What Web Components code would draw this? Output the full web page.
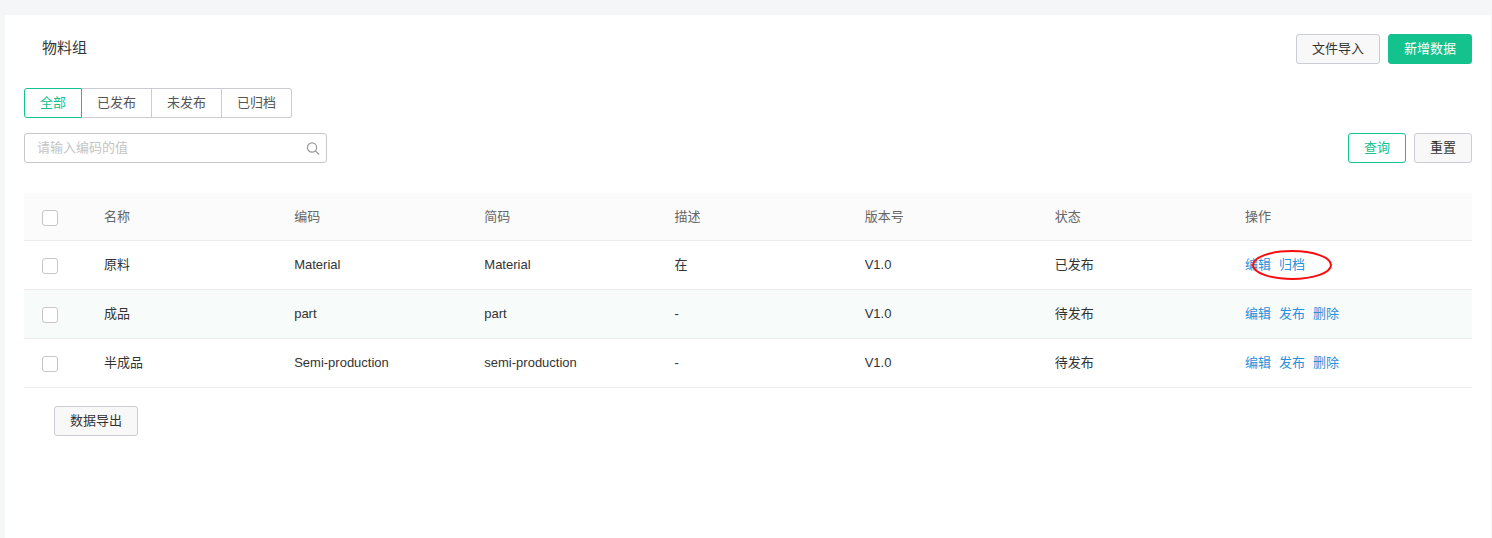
<!DOCTYPE html>
<html lang="zh-CN">
<head>
<meta charset="utf-8">
<title>物料组</title>
<style>
  html { height: 100%; }
  body {
    margin: 0;
    min-height: 100%;
    display: flex;
    background: #f5f6f8;
    color: #333;
    font-family: "Liberation Sans", "Noto Sans CJK SC", sans-serif;
    font-size: 13px;
    line-height: 20px;
    --green: #13c28d;
    --border: #c9cdd2;
    --link: #2b8fd9;
  }
</style>
</head>
<body>
<material-page></material-page>

<script>
class UiButton extends HTMLElement {
  constructor() {
    super();
    this.attachShadow({ mode: 'open' });
    this.shadowRoot.innerHTML = `
      <style>
        :host { display: block; flex: none; }
        button {
          display: block;
          height: 30px;
          padding: 0 15px;
          box-sizing: border-box;
          border: 1px solid var(--border);
          border-radius: 3px;
          background: #f8f8f9;
          color: #333;
          font: inherit;
          line-height: 20px;
          cursor: pointer;
        }
        :host([kind="primary"]) button {
          background: var(--green);
          border-color: var(--green);
          color: #fff;
        }
        :host([kind="outline"]) button {
          background: #fff;
          border-color: var(--green);
          color: var(--green);
        }
      </style>
      <button type="button"><slot></slot></button>
    `;
  }
}

class StatusTabs extends HTMLElement {
  constructor() {
    super();
    this.attachShadow({ mode: 'open' });
  }

  connectedCallback() {
    const tabs = this.getAttribute('options').split(',');
    this.shadowRoot.innerHTML = `
      <style>
        :host { display: block; }
        .group { display: flex; }
        label {
          height: 30px;
          box-sizing: border-box;
          padding: 4px 15px;
          border: 1px solid var(--border);
          border-left-width: 0;
          background: #fff;
          color: #555;
          cursor: pointer;
        }
        label:first-child { border-left-width: 1px; border-radius: 3px 0 0 3px; }
        label:last-child { border-radius: 0 3px 3px 0; }
        label:has(:checked) { border-color: var(--green); color: var(--green); }
        input { appearance: none; width: 0; height: 0; margin: 0; position: absolute; }
      </style>
      <div class="group" role="radiogroup" aria-label="状态">${tabs.map((tab, i) =>
        `<label><input type="radio" name="status" value="${tab}" ${i === 0 ? 'checked' : ''}>${tab}</label>`).join('')}</div>
    `;
  }
}

class SearchBox extends HTMLElement {
  constructor() {
    super();
    this.attachShadow({ mode: 'open' });
  }

  connectedCallback() {
    this.shadowRoot.innerHTML = `
      <style>
        :host { display: block; flex: 0 1 303px; }
        label {
          display: flex;
          align-items: center;
          height: 30px;
          box-sizing: border-box;
          padding: 0 6px 0 12px;
          border: 1px solid #c8c8c8;
          border-radius: 3px;
          background: #fff;
        }
        input {
          flex: 1;
          min-width: 0;
          padding: 0;
          border: 0;
          outline: none;
          background: none;
          color: #333;
          font: inherit;
        }
        input::placeholder { color: #c4c4c4; opacity: 1; }
        svg { width: 14px; height: 14px; flex: none; }
      </style>
      <label>
        <input type="text" aria-label="编码" placeholder="${this.getAttribute('placeholder')}">
        <svg viewBox="0 0 14 14" fill="none" stroke="#999" stroke-width="1.2" stroke-linecap="round">
          <circle cx="6" cy="6.5" r="4.6"/>
          <path d="M9.4 9.9 L12.8 13.2"/>
        </svg>
      </label>
    `;
  }
}

class MaterialTable extends HTMLElement {
  constructor() {
    super();
    this.attachShadow({ mode: 'open' });
    this.columns = ['名称', '编码', '简码', '描述', '版本号', '状态'];
    this.rows = [
      { cells: ['原料', 'Material', 'Material', '在', 'V1.0', '已发布'], actions: ['编辑', '归档'], marked: true },
      { cells: ['成品', 'part', 'part', '-', 'V1.0', '待发布'], actions: ['编辑', '发布', '删除'] },
      { cells: ['半成品', 'Semi-production', 'semi-production', '-', 'V1.0', '待发布'], actions: ['编辑', '发布', '删除'] }
    ];
  }

  connectedCallback() {
    this.shadowRoot.innerHTML = `
      <style>
        :host { display: block; }
        table {
          width: 100%;
          table-layout: fixed;
          border-collapse: separate;
          border-spacing: 0;
        }
        th, td {
          height: 48px;
          padding: 0;
          border-bottom: 1px solid #ececec;
          text-align: left;
          font-weight: normal;
        }
        th { height: 47px; background: #fbfbfb; color: #666; }
        tbody tr:nth-child(even) { background: #f7fbfa; }
        .check { width: 80px; }
        .ops { width: 227px; }
        input {
          appearance: none;
          display: block;
          width: 16px;
          height: 16px;
          margin: 2px 0 0 18px;
          border: 1px solid #c6c6c6;
          border-radius: 3px;
          background: #fff;
        }
        input:checked { background: var(--green); border-color: var(--green); }
        .actions { display: flex; gap: 8px; position: relative; }
        a { color: var(--link); text-decoration: none; }
        /* hand-drawn ring over the archive action */
        .ring {
          position: absolute;
          left: 7px;
          top: -5px;
          width: 80px;
          height: 30px;
          pointer-events: none;
        }
      </style>
      <table>
        <thead>
          <tr>
            <th class="check"><input type="checkbox" aria-label="全选"></th>
            ${this.columns.map(name => `<th>${name}</th>`).join('')}
            <th class="ops">操作</th>
          </tr>
        </thead>
        <tbody>${this.rows.map(row => this.renderRow(row)).join('')}</tbody>
      </table>
    `;
  }

  renderRow(row) {
    const ring = `
      <svg class="ring" viewBox="0 0 80 30" aria-hidden="true">
        <ellipse cx="40" cy="15" rx="39" ry="14" fill="none" stroke="#f90d0d" stroke-width="2"/>
      </svg>`;
    return `
      <tr>
        <td><input type="checkbox" aria-label="${row.cells[0]}"></td>
        ${row.cells.map(cell => `<td>${cell}</td>`).join('')}
        <td>
          <div class="actions">
            ${row.actions.map(action => `<a href="#">${action}</a>`).join('')}
            ${row.marked ? ring : ''}
          </div>
        </td>
      </tr>`;
  }
}

class MaterialPage extends HTMLElement {
  constructor() {
    super();
    this.attachShadow({ mode: 'open' });
    this.shadowRoot.innerHTML = `
      <style>
        :host {
          display: block;
          flex: 1;
          min-width: 0;
          margin: 15px 1px 0 5px;
          padding: 19px 19px 40px;
          background: #fff;
        }
        header, .filters {
          display: flex;
          align-items: center;
          justify-content: space-between;
        }
        header { margin-bottom: 24px; }
        h1 {
          margin: 0 0 2px 18px;
          font-size: 15px;
          line-height: 20px;
          font-weight: normal;
        }
        .buttons { display: flex; gap: 8px; }
        .filters { margin: 15px 0 30px; }
        footer { display: flex; margin: 18px 0 0 30px; }
      </style>
      <header>
        <h1>物料组</h1>
        <div class="buttons">
          <ui-button>文件导入</ui-button>
          <ui-button kind="primary">新增数据</ui-button>
        </div>
      </header>
      <status-tabs options="全部,已发布,未发布,已归档"></status-tabs>
      <div class="filters">
        <search-box placeholder="请输入编码的值"></search-box>
        <div class="buttons">
          <ui-button kind="outline">查询</ui-button>
          <ui-button>重置</ui-button>
        </div>
      </div>
      <material-table></material-table>
      <footer><ui-button>数据导出</ui-button></footer>
    `;
  }
}

customElements.define('ui-button', UiButton);
customElements.define('status-tabs', StatusTabs);
customElements.define('search-box', SearchBox);
customElements.define('material-table', MaterialTable);
customElements.define('material-page', MaterialPage);
</script>
</body>
</html>
